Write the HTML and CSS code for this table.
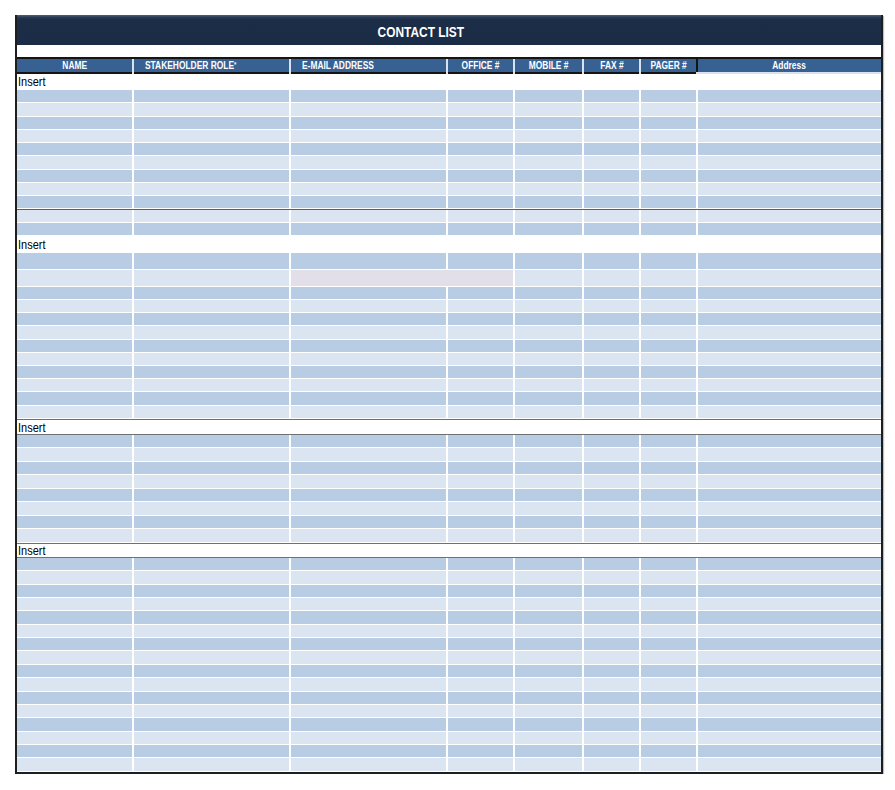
FILE: index.html
```html
<!DOCTYPE html>
<html>
<head>
<meta charset="utf-8">
<link rel="stylesheet" href="styles.css">
</head>
<body>
<div class="sheet">
  <div class="title"><b class="nt">CONTACT LIST</b></div>
  <div class="blank"></div>
  <div class="r head">
    <span class="c"><b class="nc">NAME</b></span>
    <span><b class="nl">STAKEHOLDER ROLE<small>*</small></b></span>
    <span><b class="nl">E-MAIL ADDRESS</b></span>
    <span class="c"><b class="nc">OFFICE #</b></span>
    <span class="c"><b class="nc">MOBILE #</b></span>
    <span class="c"><b class="nc">FAX #</b></span>
    <span class="c"><b class="nc">PAGER #</b></span>
    <span class="c addr"><b class="nc">Address</b></span>
  </div>

  <div class="r ins first"><span class="lbl"><i>Insert</i></span><span></span><span></span><span></span><span></span><span></span><span></span><span class="open"></span></div>
  <div class="sec s1">
    <div class="r b"><span></span><span></span><span></span><span></span><span></span><span></span><span></span><span></span></div>
    <div class="r l"><span></span><span></span><span></span><span></span><span></span><span></span><span></span><span></span></div>
    <div class="r b"><span></span><span></span><span></span><span></span><span></span><span></span><span></span><span></span></div>
    <div class="r l"><span></span><span></span><span></span><span></span><span></span><span></span><span></span><span></span></div>
    <div class="r b"><span></span><span></span><span></span><span></span><span></span><span></span><span></span><span></span></div>
    <div class="r l"><span></span><span></span><span></span><span></span><span></span><span></span><span></span><span></span></div>
    <div class="r b"><span></span><span></span><span></span><span></span><span></span><span></span><span></span><span></span></div>
    <div class="r l"><span></span><span></span><span></span><span></span><span></span><span></span><span></span><span></span></div>
    <div class="r b"><span></span><span></span><span></span><span></span><span></span><span></span><span></span><span></span></div>
    <div class="r l rule"><span></span><span></span><span></span><span></span><span></span><span></span><span></span><span></span></div>
    <div class="r b"><span></span><span></span><span></span><span></span><span></span><span></span><span></span><span></span></div>
  </div>

  <div class="insert i2"><i>Insert</i></div>
  <div class="sec s2">
    <div class="r b tall"><span></span><span></span><span></span><span></span><span></span><span></span><span></span><span></span></div>
    <div class="r l tall"><span></span><span></span><span class="pk"></span><span></span><span></span><span></span><span></span></div>
    <div class="r b"><span></span><span></span><span></span><span></span><span></span><span></span><span></span><span></span></div>
    <div class="r l"><span></span><span></span><span></span><span></span><span></span><span></span><span></span><span></span></div>
    <div class="r b"><span></span><span></span><span></span><span></span><span></span><span></span><span></span><span></span></div>
    <div class="r l"><span></span><span></span><span></span><span></span><span></span><span></span><span></span><span></span></div>
    <div class="r b"><span></span><span></span><span></span><span></span><span></span><span></span><span></span><span></span></div>
    <div class="r l"><span></span><span></span><span></span><span></span><span></span><span></span><span></span><span></span></div>
    <div class="r b"><span></span><span></span><span></span><span></span><span></span><span></span><span></span><span></span></div>
    <div class="r l"><span></span><span></span><span></span><span></span><span></span><span></span><span></span><span></span></div>
    <div class="r b"><span></span><span></span><span></span><span></span><span></span><span></span><span></span><span></span></div>
    <div class="r l"><span></span><span></span><span></span><span></span><span></span><span></span><span></span><span></span></div>
  </div>

  <div class="insert i3 lined"><i>Insert</i></div>
  <div class="sec s3">
    <div class="r b"><span></span><span></span><span></span><span></span><span></span><span></span><span></span><span></span></div>
    <div class="r l"><span></span><span></span><span></span><span></span><span></span><span></span><span></span><span></span></div>
    <div class="r b"><span></span><span></span><span></span><span></span><span></span><span></span><span></span><span></span></div>
    <div class="r l"><span></span><span></span><span></span><span></span><span></span><span></span><span></span><span></span></div>
    <div class="r b"><span></span><span></span><span></span><span></span><span></span><span></span><span></span><span></span></div>
    <div class="r l"><span></span><span></span><span></span><span></span><span></span><span></span><span></span><span></span></div>
    <div class="r b"><span></span><span></span><span></span><span></span><span></span><span></span><span></span><span></span></div>
    <div class="r l"><span></span><span></span><span></span><span></span><span></span><span></span><span></span><span></span></div>
  </div>

  <div class="insert i4 lined"><i>Insert</i></div>
  <div class="sec s4">
    <div class="r b"><span></span><span></span><span></span><span></span><span></span><span></span><span></span><span></span></div>
    <div class="r l"><span></span><span></span><span></span><span></span><span></span><span></span><span></span><span></span></div>
    <div class="r b"><span></span><span></span><span></span><span></span><span></span><span></span><span></span><span></span></div>
    <div class="r l"><span></span><span></span><span></span><span></span><span></span><span></span><span></span><span></span></div>
    <div class="r b"><span></span><span></span><span></span><span></span><span></span><span></span><span></span><span></span></div>
    <div class="r l"><span></span><span></span><span></span><span></span><span></span><span></span><span></span><span></span></div>
    <div class="r b"><span></span><span></span><span></span><span></span><span></span><span></span><span></span><span></span></div>
    <div class="r l"><span></span><span></span><span></span><span></span><span></span><span></span><span></span><span></span></div>
    <div class="r b"><span></span><span></span><span></span><span></span><span></span><span></span><span></span><span></span></div>
    <div class="r l"><span></span><span></span><span></span><span></span><span></span><span></span><span></span><span></span></div>
    <div class="r b"><span></span><span></span><span></span><span></span><span></span><span></span><span></span><span></span></div>
    <div class="r l"><span></span><span></span><span></span><span></span><span></span><span></span><span></span><span></span></div>
    <div class="r b"><span></span><span></span><span></span><span></span><span></span><span></span><span></span><span></span></div>
    <div class="r l"><span></span><span></span><span></span><span></span><span></span><span></span><span></span><span></span></div>
    <div class="r b"><span></span><span></span><span></span><span></span><span></span><span></span><span></span><span></span></div>
    <div class="r l"><span></span><span></span><span></span><span></span><span></span><span></span><span></span><span></span></div>
  </div>
</div>
</body>
</html>
```

FILE: styles.css
```css
html, body {
  margin: 0;
  padding: 0;
  background: #fff;
}
body {
  font-family: "Liberation Sans", Arial, sans-serif;
}
.sheet {
  margin: 15px 0 0 15px;
  width: 868px;
  box-sizing: border-box;
  border-left: 2px solid #1e1e1e;
  border-right: 2px solid #1e1e1e;
  border-bottom: 2px solid #1e1e1e;
  box-shadow: 1px 1px 1px rgba(0,0,0,0.25);
}
.title {
  height: 30px;
  box-sizing: border-box;
  padding: 3px 56px 0 0;
  background: linear-gradient(#46576f 0, #46576f 1px, #2a3c58 2px, #1c2d47 5px, #1b2c46 100%);
  color: #fff;
  font-size: 14px;
  display: flex;
  align-items: center;
  justify-content: center;
}
.nt {
  display: inline-block;
  font-weight: bold;
  transform: scaleX(0.85);
  transform-origin: center;
}
.blank {
  height: 12px;
  background: #fff;
  border-bottom: 2px solid #151515;
}
.r {
  display: grid;
  grid-template-columns: 115px 155px 155px 65px 67px 55px 55px 183px;
  column-gap: 2px;
  background: #fff;
  box-sizing: border-box;
  padding-bottom: 1px;
}
.r > span { display: block; }
.b > span { background: #b8cce4; }
.l > span { background: #dbe5f1; }
.l > span.pk {
  grid-column: span 2;
  background: #e3dfe9;
}
.head {
  height: 15px;
  padding: 0;
  background: #d9e2ee;
}
.head > span {
  background: #376193;
  color: #fff;
  font-size: 10px;
  line-height: 14px;
  height: 13px;
  border-bottom: 2px solid #141414;
  padding-left: 11px;
  white-space: nowrap;
  overflow: hidden;
}
.head b {
  display: inline-block;
  font-weight: bold;
  transform: scaleX(0.84);
}
.head b.nl { transform-origin: left center; }
.head b.nc { transform-origin: center; }
.head > span.c { padding-left: 0; text-align: center; }
.head > span.addr {
  border-bottom: none;
  box-shadow: -2px 0 0 #141414;
}
.head small { font-size: 7px; line-height: 0; vertical-align: 2px; }
.ins.first {
  height: 16px;
  padding: 0;
}
.ins.first > span {
  background: #fff;
  border-bottom: 1px solid #6f6f6f;
}
.ins.first > span.open { border-bottom: none; }
.ins.first > span.lbl { border-bottom: none; }
.lbl, .insert {
  font-size: 12.5px;
  color: #000;
  line-height: 17px;
  padding-left: 1px;
  white-space: nowrap;
}
.lbl i, .insert i {
  font-style: normal;
  display: inline-block;
  transform: scaleX(0.88);
  transform-origin: left center;
}
.insert {
  background: #fff;
  box-sizing: border-box;
}
.i2 { height: 17px; line-height: 18px; }
.i3 { height: 16px; line-height: 16px; }
.i4 { height: 15px; line-height: 14px; }
.lined {
  border-top: 1px solid #707070;
  border-bottom: 1px solid #707070;
}
.s1 .r { height: 13.27px; }
.s2 .r { height: 13.2px; }
.s2 .r.tall { height: 17px; }
.s3 .r { height: 13.5px; }
.s4 .r { height: 13.375px; }
.rule { border-top: 1px solid #5e5e5e; }
```
